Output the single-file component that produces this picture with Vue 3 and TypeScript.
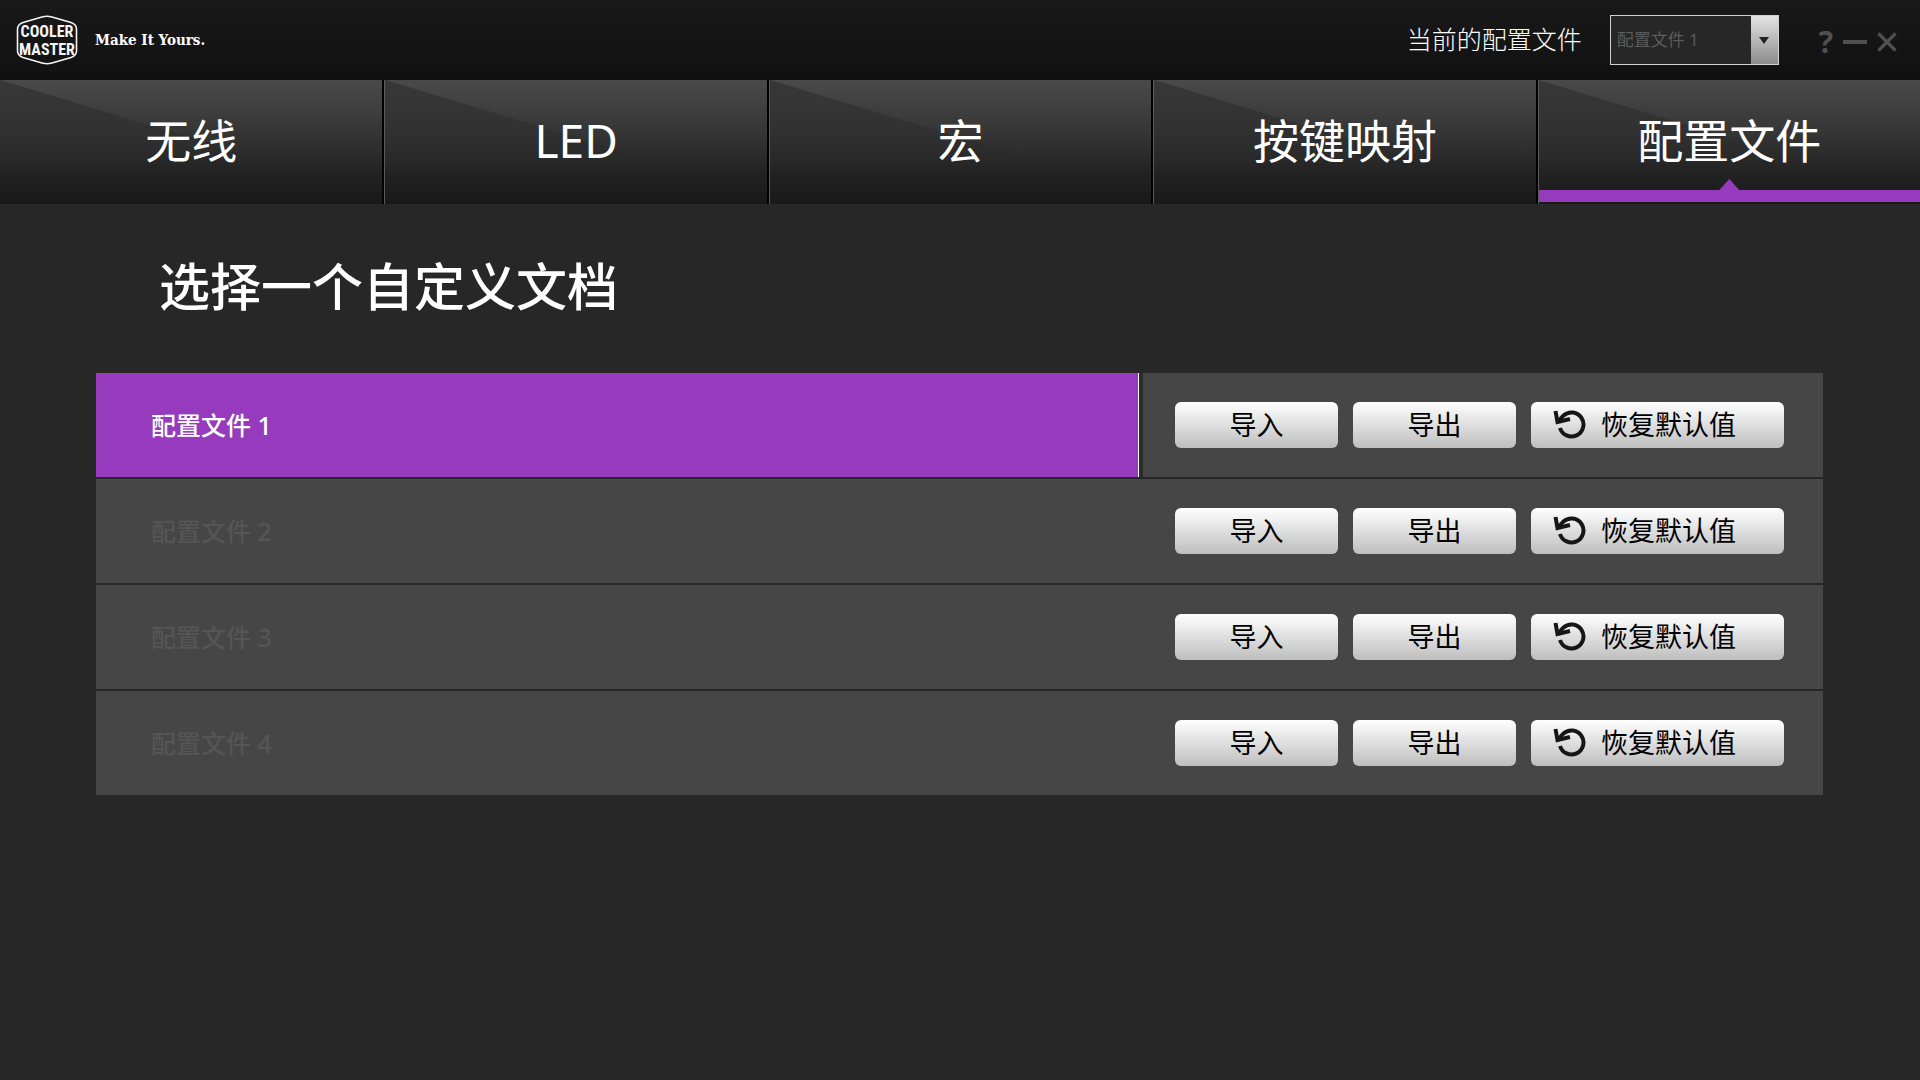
<script setup lang="ts">
import { ref } from 'vue'

interface Profile {
  id: number
  name: string
}

const tabs: string[] = ['无线', 'LED', '宏', '按键映射', '配置文件']
const activeTab = ref(4)

const profiles: Profile[] = [1, 2, 3, 4].map((id) => ({ id, name: `配置文件 ${id}` }))
const activeProfile = ref(1)
</script>

<template>
  <div class="app">
    <header class="titlebar">
      <a class="brand" href="#" aria-label="Cooler Master">
        <svg class="logo" width="62" height="50" viewBox="0 0 62 50" aria-hidden="true">
          <path
            d="M31 1.200Q33 1.200 36 2L55 7.500Q60.500 9.500 60.500 14V36Q60.500 40.500 55 42.500L36 48Q33 48.800 31 48.800Q29 48.800 26 48L7 42.500Q1.500 40.500 1.500 36V14Q1.500 9.500 7 7.500L26 2Q29 1.200 31 1.200Z"
            fill="none"
            stroke="#f4f4f4"
            stroke-width="1.600"
          />
          <text class="logo-text" text-anchor="middle" x="31" y="22">COOLER</text>
          <text class="logo-text" text-anchor="middle" x="31" y="40">MASTER</text>
        </svg>
        <span class="slogan">Make It Yours.</span>
      </a>

      <div class="tools">
        <label class="current-label" for="current-profile">当前的配置文件</label>
        <div class="picker">
          <select id="current-profile" v-model="activeProfile">
            <option v-for="p in profiles" :key="p.id" :value="p.id">{{ p.name }}</option>
          </select>
          <span class="picker-arrow">
            <svg width="10" height="7" viewBox="0 0 10 7"><path d="M0 0H10L5 7Z" fill="#222" /></svg>
          </span>
        </div>
        <div class="window-buttons">
          <button type="button" class="help" aria-label="帮助">?</button>
          <button type="button" aria-label="最小化">
            <svg width="24" height="20" viewBox="0 0 24 20"><path d="M0 10H24" stroke="#505050" stroke-width="4" /></svg>
          </button>
          <button type="button" aria-label="关闭">
            <svg width="20" height="20" viewBox="0 0 20 20"><path d="M1.500 1.500L18.500 18.500M18.500 1.500L1.500 18.500" stroke="#505050" stroke-width="3.200" /></svg>
          </button>
        </div>
      </div>
    </header>

    <nav class="tabs">
      <button
        v-for="(tab, i) in tabs"
        :key="tab"
        type="button"
        class="tab"
        :class="{ active: i === activeTab }"
        @click="activeTab = i"
      >
        <span>{{ tab }}</span>
      </button>
    </nav>

    <main class="content">
      <h1>选择一个自定义文档</h1>
      <ul class="profiles">
        <li
          v-for="p in profiles"
          :key="p.id"
          class="profile"
          :class="{ active: p.id === activeProfile }"
        >
          <button type="button" class="profile-name" @click="activeProfile = p.id">{{ p.name }}</button>
          <div class="actions">
            <button type="button" class="action">导入</button>
            <button type="button" class="action">导出</button>
            <button type="button" class="action restore">
              <svg width="33" height="30" viewBox="0 0 33 30" fill="none" stroke="#161616" stroke-width="4">
                <path d="M7 19A12 12 0 1 0 10.500 6.500L5.500 12" />
                <path d="M2.500 2L4.500 13L17 10" />
              </svg>
              <span>恢复默认值</span>
            </button>
          </div>
        </li>
      </ul>
    </main>
  </div>
</template>

<style>
body {
  background: #272727;
}
</style>

<style scoped>
.app {
  min-height: 100vh;
  background: #272727;
  color: #fff;
  font-family: 'Noto Sans', 'Noto Sans CJK SC', sans-serif;
}

button {
  margin: 0;
  padding: 0;
  border: 0;
  background: none;
  color: inherit;
  font: inherit;
  cursor: pointer;
}

.titlebar {
  display: flex;
  align-items: center;
  justify-content: space-between;
  height: 80px;
  padding: 0 23px 0 16px;
  background: linear-gradient(#191919, #111);
}

.brand {
  display: flex;
  align-items: center;
  gap: 17px;
  color: #fff;
  text-decoration: none;
}

.logo {
  display: block;
}

.logo-text {
  fill: #f4f4f4;
  font-family: 'Roboto Condensed', 'Liberation Sans Narrow', 'DejaVu Sans Condensed', sans-serif;
  font-size: 16px;
  font-weight: 700;
}

.slogan {
  font-family: 'DejaVu Serif Condensed', 'DejaVu Serif', serif;
  font-size: 15px;
  font-weight: 700;
  line-height: 20px;
}

.tools {
  display: flex;
  align-items: center;
}

.current-label {
  margin-right: 28px;
  padding-bottom: 5px;
  font-family: 'Noto Sans CJK SC', sans-serif;
  font-size: 25px;
  font-weight: 300;
  line-height: 36px;
}

.picker {
  position: relative;
  width: 169px;
  height: 50px;
}

.picker select {
  width: 100%;
  height: 100%;
  padding: 0 28px 2px 6px;
  border: 1px solid #d2d2d2;
  border-radius: 0;
  appearance: none;
  background: #272727;
  color: #5c5c5c;
  font-family: 'Noto Sans', 'Noto Sans CJK SC', sans-serif;
  font-size: 17px;
}

.picker-arrow {
  position: absolute;
  top: 1px;
  right: 1px;
  bottom: 1px;
  display: flex;
  align-items: center;
  justify-content: center;
  width: 27px;
  background: linear-gradient(#e4e4e4, #8c8c8c);
  pointer-events: none;
}

.window-buttons {
  display: flex;
  align-items: center;
  gap: 10px;
  margin-left: 40px;
  padding-top: 4px;
}

.window-buttons svg {
  display: block;
}

.help {
  color: #505050;
  font-size: 30px;
  font-weight: 700;
  line-height: 30px;
}

.tabs {
  display: grid;
  grid-template-columns: repeat(5, 1fr);
  gap: 2px;
  height: 124px;
  background: #000;
}

.tab {
  position: relative;
  padding-bottom: 5px;
  background: linear-gradient(#4a4a4a, #343434 45%, #212121 78%, #191919);
  font-size: 46px;
  line-height: 64px;
}

.tab + .tab {
  border-left: 1px solid #5a5a5a;
}

/* Darker wedge under the diagonal highlight */
.tab::before {
  content: '';
  position: absolute;
  inset: 0;
  background: linear-gradient(rgba(0, 0, 0, 0.26), rgba(0, 0, 0, 0) 65%);
  clip-path: polygon(0 0, 100% 93%, 100% 100%, 0 100%);
}

.tab span {
  position: relative;
}

.tab.active {
  background:
    linear-gradient(#963bbd, #963bbd) 0 110px / 100% 12px no-repeat,
    linear-gradient(#4a4a4a, #343434 45%, #212121 78%, #191919);
}

.tab.active::after {
  content: '';
  position: absolute;
  bottom: 14px;
  left: 50%;
  width: 20px;
  height: 11px;
  margin-left: -10px;
  background: #963bbd;
  clip-path: polygon(50% 0, 100% 100%, 0 100%);
}

.content {
  padding: 44px 97px 0 96px;
}

h1 {
  margin: 0 0 53px;
  padding-left: 63px;
  font-family: 'Noto Sans CJK TC', sans-serif;
  font-size: 51px;
  font-weight: 500;
  line-height: 72px;
}

.profiles {
  display: flex;
  flex-direction: column;
  gap: 2px;
  margin: 0;
  padding: 0;
  list-style: none;
}

.profile {
  display: flex;
  height: 104px;
  background: #464646;
}

.profile-name {
  flex: 1;
  padding: 0 0 3px 55px;
  color: #555;
  font-size: 25px;
  font-weight: 500;
  text-align: left;
}

.profile.active .profile-name {
  border-right: 1px solid #fff;
  background: #963bbd;
  color: #fff;
}

.profile.active .actions {
  border-left: 4px solid #2b2b2b;
}

.actions {
  display: flex;
  align-items: center;
  gap: 15px;
  padding: 0 39px 0 32px;
}

.action {
  width: 163px;
  height: 46px;
  padding-bottom: 2px;
  border-radius: 6px;
  background: linear-gradient(#fff, #bebebe);
  color: #000;
  font-family: 'Noto Sans CJK SC', sans-serif;
  font-size: 27px;
  line-height: 44px;
}

.restore {
  display: flex;
  align-items: center;
  gap: 15px;
  width: 253px;
  padding-left: 22px;
}
</style>
